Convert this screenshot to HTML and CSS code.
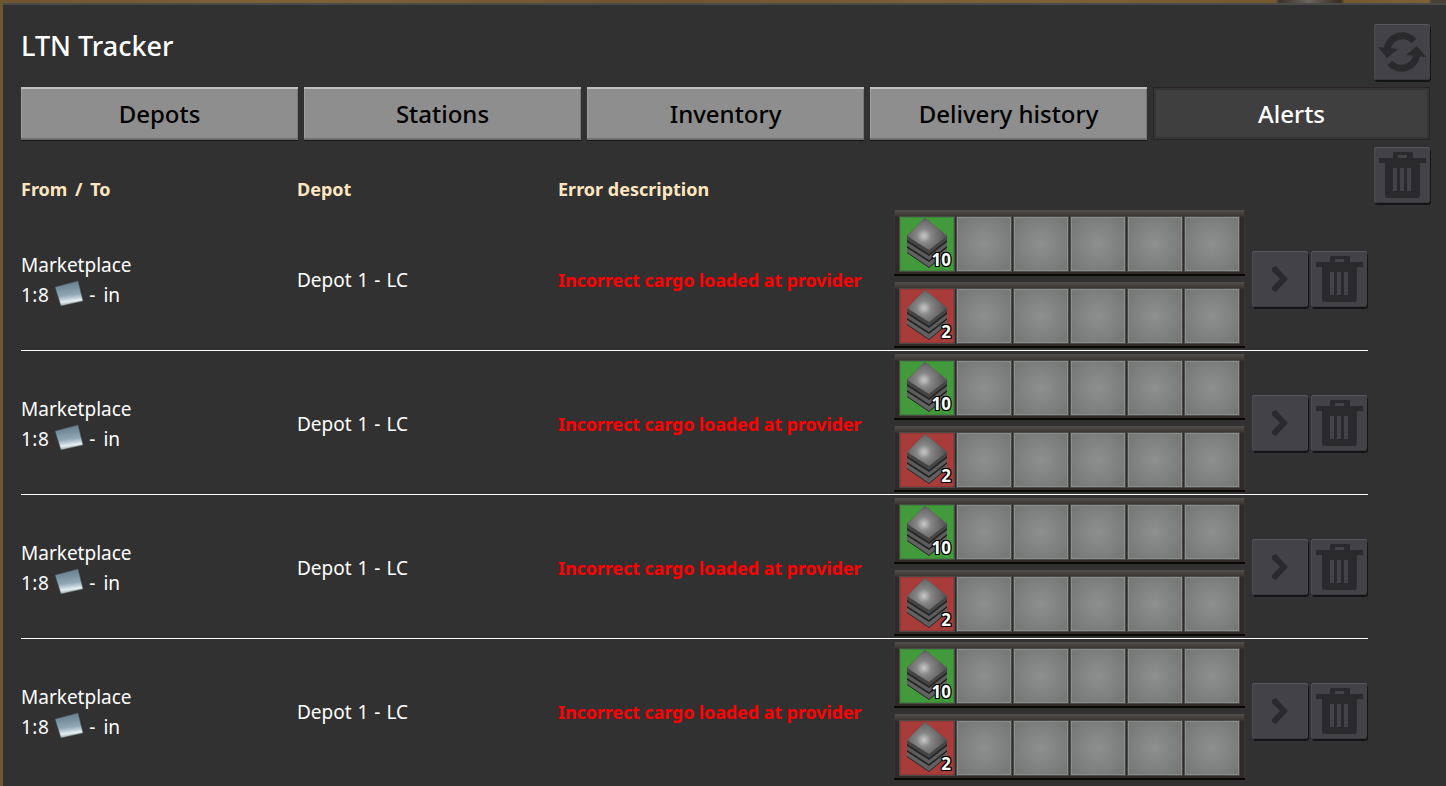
FILE: index.html
```html
<!DOCTYPE html>
<html lang="en">
<head>
<meta charset="utf-8">
<title>LTN Tracker</title>
<link rel="stylesheet" href="styles.css">
</head>
<body>
<svg class="defs" width="0" height="0" aria-hidden="true">
  <defs>
    <radialGradient id="steelTop" gradientUnits="userSpaceOnUse" cx="24" cy="19" r="21">
      <stop offset="0" stop-color="#c8c8c8"/><stop offset="0.35" stop-color="#858585"/><stop offset="1" stop-color="#565656"/>
    </radialGradient>
    <linearGradient id="plate" x1="0.15" y1="0" x2="0.3" y2="1">
      <stop offset="0" stop-color="#5f7788"/><stop offset="0.6" stop-color="#8fa6b4"/><stop offset="0.85" stop-color="#e6eef2"/><stop offset="1" stop-color="#8a9ca8"/>
    </linearGradient>
    <symbol id="steel" viewBox="0 0 54 54">
      <path d="M7 19 L7 36 L29 51 L47 36 L47 19 Z" fill="#242424"/>
      <path d="M7 25 L29 39 L47 25 L47 29 L29 43 L7 29 Z" fill="#5c5c5c"/>
      <path d="M7 31 L29 45 L47 31 L47 35 L29 50 L7 35 Z" fill="#626262"/>
      <path d="M7 19 L25 1 L47 19 L47 23 L29 37 L7 23 Z" fill="#454545"/>
      <path d="M7 19 L25 1 L47 19 L29 33 Z" fill="url(#steelTop)"/>
    </symbol>
    <symbol id="trash" viewBox="0 0 56 56">
      <path fill="#2a2a2c" fill-rule="evenodd" d="M19 5h19a1 1 0 0 1 1 1v5h13v5H5v-5h14V6a1 1 0 0 1 1-1zm5 3v3h9V8zM11 16h35v32a3 3 0 0 1-3 3H14a3 3 0 0 1-3-3zm8 5v23h4V21zm7 0v23h4V21zm7 0v23h4V21z"/>
    </symbol>
    <symbol id="refresh" viewBox="0 0 56 56">
      <g fill="none" stroke="#2a2a2c" stroke-width="7">
        <path d="M13 27 A15.500 15.500 0 0 1 40 17"/>
        <path d="M43 29 A15.500 15.500 0 0 1 16 39"/>
      </g>
      <path fill="#2a2a2c" d="M4 23 L24 25 L13 34 Z M52 33 L32 31 L43 22 Z"/>
    </symbol>
    <symbol id="chevron" viewBox="0 0 56 56">
      <path fill="#2a2a2c" d="M20 17l4-2 12 13-12 13-4-2v-3l8-8-8-8z"/>
    </symbol>
    <symbol id="plate-icon" viewBox="0 0 30 30">
      <path d="M1 7 L24 1 L29 21 L7 26 Z" fill="url(#plate)" stroke="#46545c" stroke-width=".5"/>
    </symbol>
  </defs>
</svg>
<main class="panel">
  <header class="titlebar">
    <h1 class="title">LTN Tracker</h1>
    <button class="icon-btn" aria-label="Refresh"><svg class="icon"><use href="#refresh"/></svg></button>
  </header>
  <nav class="tabs">
    <button class="tab">Depots</button>
    <button class="tab">Stations</button>
    <button class="tab">Inventory</button>
    <button class="tab">Delivery history</button>
    <button class="tab tab-active">Alerts</button>
  </nav>
  <div class="table-head">
    <span class="col-a">From / To</span>
    <span class="col-b">Depot</span>
    <span class="col-c">Error description</span>
    <button class="icon-btn head-trash" aria-label="Delete all"><svg class="icon"><use href="#trash"/></svg></button>
  </div>
  <section class="rows">
    <article class="row">
      <div class="col-a from">
        <span>Marketplace</span>
        <span class="route"><span class="ratio">1:8</span><svg class="plate"><use href="#plate-icon"/></svg><span class="dir">- in</span></span>
      </div>
      <div class="col-b depot">Depot 1 - LC</div>
      <div class="col-c error">Incorrect cargo loaded at provider</div>
      <div class="tables">
        <div class="slots">
          <div class="slot slot-green"><svg class="steel"><use href="#steel"/></svg><b class="count">10</b></div>
          <div class="slot"></div><div class="slot"></div><div class="slot"></div><div class="slot"></div><div class="slot"></div>
        </div>
        <div class="slots">
          <div class="slot slot-red"><svg class="steel"><use href="#steel"/></svg><b class="count">2</b></div>
          <div class="slot"></div><div class="slot"></div><div class="slot"></div><div class="slot"></div><div class="slot"></div>
        </div>
      </div>
      <div class="actions">
        <button class="icon-btn" aria-label="Open"><svg class="icon"><use href="#chevron"/></svg></button>
        <button class="icon-btn" aria-label="Delete"><svg class="icon"><use href="#trash"/></svg></button>
      </div>
    </article>
    <article class="row">
      <div class="col-a from">
        <span>Marketplace</span>
        <span class="route"><span class="ratio">1:8</span><svg class="plate"><use href="#plate-icon"/></svg><span class="dir">- in</span></span>
      </div>
      <div class="col-b depot">Depot 1 - LC</div>
      <div class="col-c error">Incorrect cargo loaded at provider</div>
      <div class="tables">
        <div class="slots">
          <div class="slot slot-green"><svg class="steel"><use href="#steel"/></svg><b class="count">10</b></div>
          <div class="slot"></div><div class="slot"></div><div class="slot"></div><div class="slot"></div><div class="slot"></div>
        </div>
        <div class="slots">
          <div class="slot slot-red"><svg class="steel"><use href="#steel"/></svg><b class="count">2</b></div>
          <div class="slot"></div><div class="slot"></div><div class="slot"></div><div class="slot"></div><div class="slot"></div>
        </div>
      </div>
      <div class="actions">
        <button class="icon-btn" aria-label="Open"><svg class="icon"><use href="#chevron"/></svg></button>
        <button class="icon-btn" aria-label="Delete"><svg class="icon"><use href="#trash"/></svg></button>
      </div>
    </article>
    <article class="row">
      <div class="col-a from">
        <span>Marketplace</span>
        <span class="route"><span class="ratio">1:8</span><svg class="plate"><use href="#plate-icon"/></svg><span class="dir">- in</span></span>
      </div>
      <div class="col-b depot">Depot 1 - LC</div>
      <div class="col-c error">Incorrect cargo loaded at provider</div>
      <div class="tables">
        <div class="slots">
          <div class="slot slot-green"><svg class="steel"><use href="#steel"/></svg><b class="count">10</b></div>
          <div class="slot"></div><div class="slot"></div><div class="slot"></div><div class="slot"></div><div class="slot"></div>
        </div>
        <div class="slots">
          <div class="slot slot-red"><svg class="steel"><use href="#steel"/></svg><b class="count">2</b></div>
          <div class="slot"></div><div class="slot"></div><div class="slot"></div><div class="slot"></div><div class="slot"></div>
        </div>
      </div>
      <div class="actions">
        <button class="icon-btn" aria-label="Open"><svg class="icon"><use href="#chevron"/></svg></button>
        <button class="icon-btn" aria-label="Delete"><svg class="icon"><use href="#trash"/></svg></button>
      </div>
    </article>
    <article class="row">
      <div class="col-a from">
        <span>Marketplace</span>
        <span class="route"><span class="ratio">1:8</span><svg class="plate"><use href="#plate-icon"/></svg><span class="dir">- in</span></span>
      </div>
      <div class="col-b depot">Depot 1 - LC</div>
      <div class="col-c error">Incorrect cargo loaded at provider</div>
      <div class="tables">
        <div class="slots">
          <div class="slot slot-green"><svg class="steel"><use href="#steel"/></svg><b class="count">10</b></div>
          <div class="slot"></div><div class="slot"></div><div class="slot"></div><div class="slot"></div><div class="slot"></div>
        </div>
        <div class="slots">
          <div class="slot slot-red"><svg class="steel"><use href="#steel"/></svg><b class="count">2</b></div>
          <div class="slot"></div><div class="slot"></div><div class="slot"></div><div class="slot"></div><div class="slot"></div>
        </div>
      </div>
      <div class="actions">
        <button class="icon-btn" aria-label="Open"><svg class="icon"><use href="#chevron"/></svg></button>
        <button class="icon-btn" aria-label="Delete"><svg class="icon"><use href="#trash"/></svg></button>
      </div>
    </article>
  </section>
</main>
</body>
</html>
```
FILE: styles.css
```css
html, body {
  margin: 0;
  padding: 0;
  height: 100%;
  overflow: hidden;
}
body {
  padding: 3px 0 0 3px;
  box-sizing: border-box;
  background: linear-gradient(90deg, #6f5530, #7d6238 20%, #6e5430 45%, #7d6238 70%, #75592f 88.200%, #3a322a 88.500%, #6a6460 90.500%, #3a2c22 92.700%, #75592f 93%, #7d6238 98.800%, #4a4038 99%);
  font-family: "Noto Sans", "Open Sans", sans-serif;
  color: #fff;
}
.defs { position: absolute; }
.panel {
  height: 783px;
  box-sizing: border-box;
  padding: 19px 16px 0 18px;
  background: #313131;
  border-top: 2px solid #4a4a46;
  overflow: hidden;
}
.titlebar {
  display: flex;
  justify-content: space-between;
  align-items: flex-start;
  height: 56px;
}
.title {
  margin: 0;
  font-size: 27px;
  line-height: 44px;
  font-weight: 500;
}
.icon-btn {
  width: 56px;
  height: 56px;
  padding: 0;
  flex: none;
  background: #434347;
  border: 0;
  border-radius: 3px;
  box-shadow: inset 0 1px 0 #58585d, inset 1px 0 0 #4c4c50, inset 0 -1px 0 #39393d, 1px 2px 0 #141414;
  display: block;
}
.icon { display: block; width: 56px; height: 56px; }
.tabs {
  display: flex;
  gap: 6px;
  margin-top: 7px;
}
.tab {
  width: 277px;
  height: 53px;
  padding: 0;
  border: 0;
  background: #8e8e8e;
  box-shadow: inset 0 2px 0 #c0c0bc, inset 0 -2px 0 #6f6f6f, inset 1px 0 0 #a0a0a0, inset -1px 0 0 #787878, 0 1px 0 #151515;
  color: #000;
  font: 500 24px "Noto Sans", sans-serif;
}
.tab-active {
  background: #3f3f3f;
  color: #fff;
  box-shadow: inset 0 0 0 1px #2a2522, inset 0 0 0 3px #353535;
}
.table-head {
  display: grid;
  grid-template-columns: 276px 261px 1fr 56px;
  align-items: end;
  margin-top: 7px;
  height: 57px;
  width: 1409px;
  color: #ffe6c0;
  font-weight: 700;
  font-size: 18px;
}
.table-head span { line-height: 26px; padding-bottom: 2px; }
.table-head .col-a { word-spacing: 3px; }
.head-trash { justify-self: end; align-self: start; }
.rows { margin-top: 3px; }
.row {
  display: grid;
  grid-template-columns: 276px 261px 336px 358px auto;
  align-items: center;
  width: 1347px;
  height: 144px;
  box-sizing: border-box;
  padding: 3px 0 2px;
  border-bottom: 1px solid #fff;
  font-size: 19px;
}
.row:last-child { border-bottom-color: transparent; }
.from { display: flex; flex-direction: column; line-height: 30px; padding-top: 2px; }
.route { display: flex; align-items: center; gap: 5px; }
.ratio { letter-spacing: .5px; }
.dir { word-spacing: 3px; }
.plate { width: 30px; height: 30px; }
.depot { word-spacing: 1px; padding-top: 2px; }
.error {
  color: #f00;
  font-weight: 700;
  font-size: 18px;
  letter-spacing: -.12px;
  padding-top: 2px;
}
.tables { display: flex; flex-direction: column; gap: 6px; }
.slots {
  display: flex;
  gap: 3px;
  width: 351px;
  height: 66px;
  box-sizing: border-box;
  padding: 7px 6px 6px;
  background: linear-gradient(#514e4c, #3b3735 6px, #2f2a28 7px);
  border-bottom: 2px solid #070707;
  box-shadow: inset -1px 0 0 #3a3533, inset 1px 0 0 #3a3533;
}
.slot {
  position: relative;
  width: 54px;
  height: 54px;
  flex: none;
  box-sizing: border-box;
  background: radial-gradient(circle, #8d908e, #737674);
  border: 1px solid #8c8e8c;
  box-shadow: 0 0 0 1px #4a4a48;
}
.slot-green { background: #429a3c; border-color: #3a8a35; }
.slot-red { background: #a83c3a; border-color: #983634; }
.steel { position: absolute; left: -1px; top: -1px; width: 54px; height: 54px; }
.count {
  position: absolute;
  right: 2px;
  bottom: 0;
  font-size: 17px;
  line-height: 20px;
  color: #fff;
  text-shadow: -1px 0 0 #000, 1px 0 0 #000, 0 -1px 0 #000, 0 1px 0 #000, 1px 1px 0 #000, -1px -1px 0 #000, 1px -1px 0 #000, -1px 1px 0 #000;
}
.actions { display: flex; gap: 3px; }
```
